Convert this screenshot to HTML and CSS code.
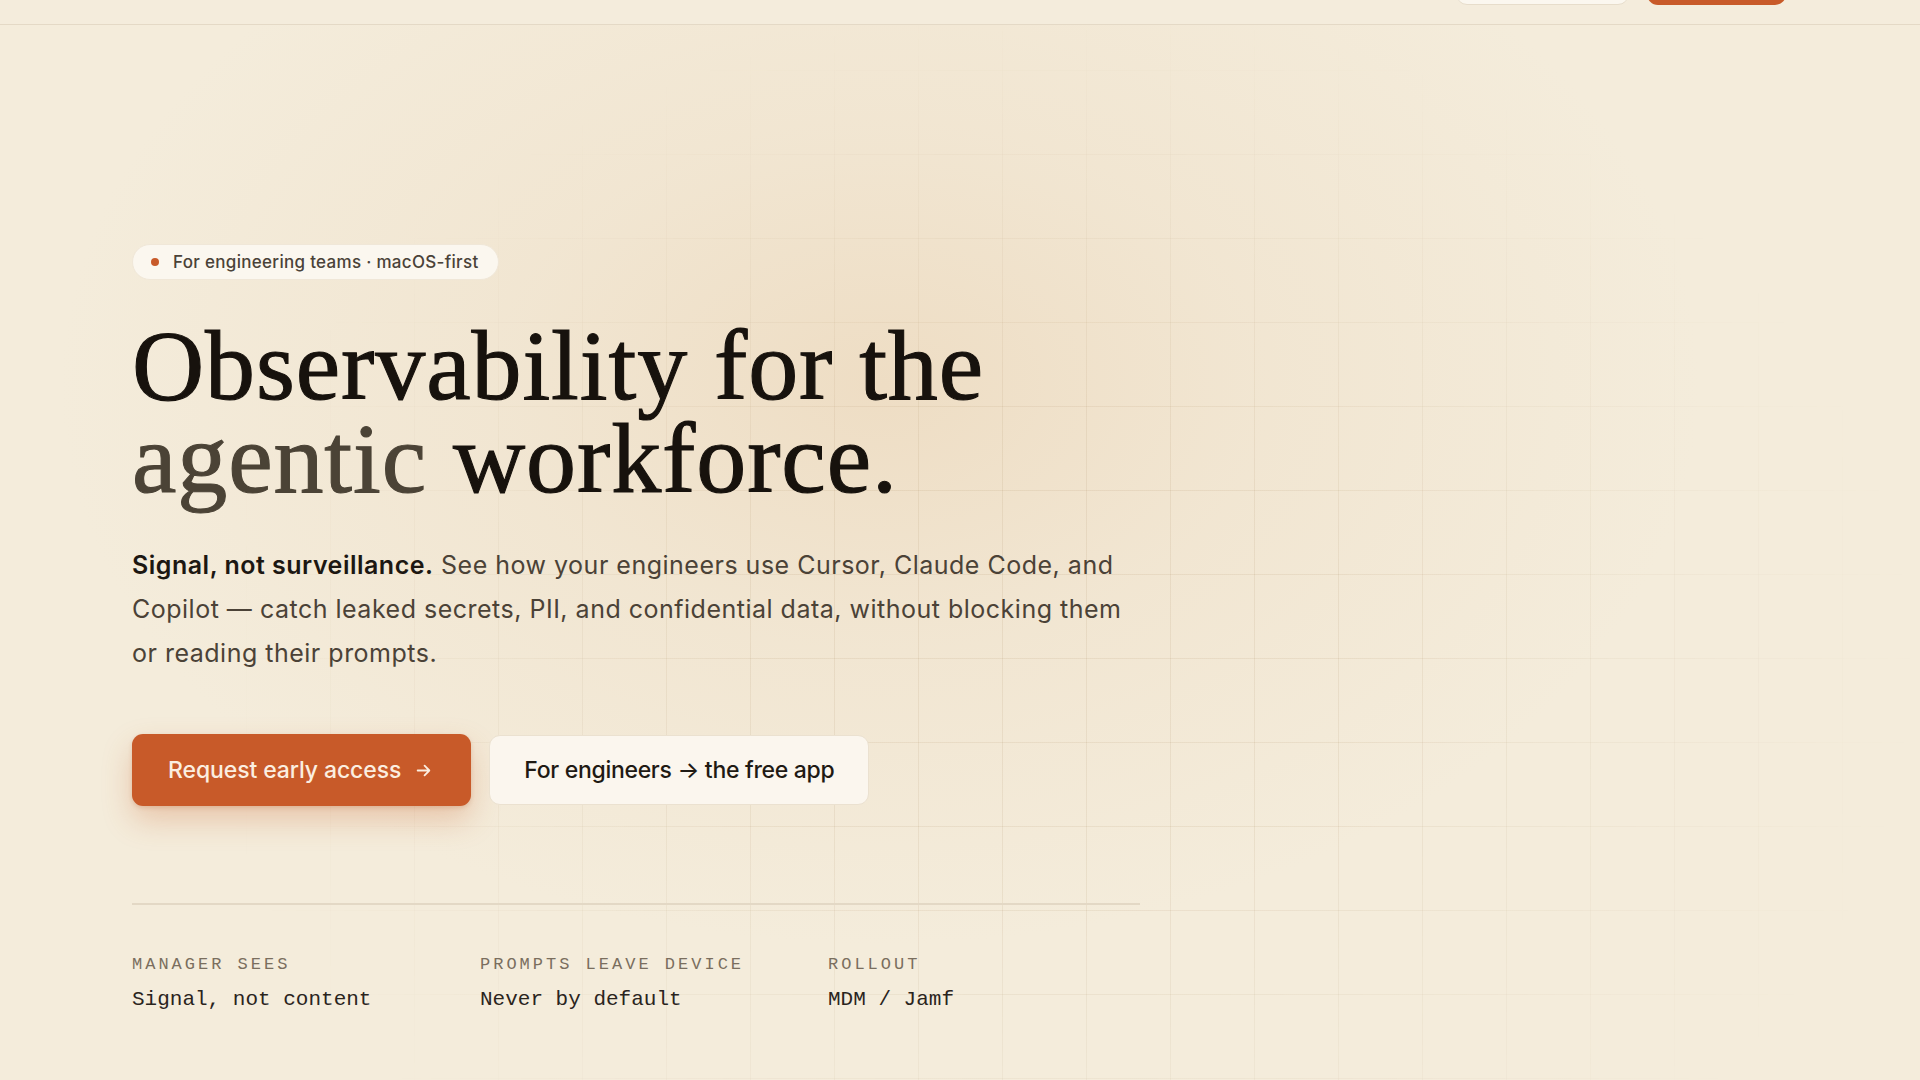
FILE: index.html
```html
<!DOCTYPE html>
<html lang="en">
<head>
<meta charset="utf-8">
<title>Observability for the agentic workforce</title>
<link rel="stylesheet" href="styles.css">
</head>
<body>
  <header class="topbar">
    <nav class="topbar-actions">
      <a class="nav-btn nav-btn-ghost" href="#" aria-label="Sign in"></a>
      <a class="nav-btn nav-btn-primary" href="#" aria-label="Get access"></a>
    </nav>
  </header>

  <main class="hero">
    <div class="hero-bg" aria-hidden="true"></div>
    <div class="hero-inner">
      <div class="badge">
        <span class="badge-dot"></span>
        <span>For engineering teams · macOS-first</span>
      </div>

      <h1 class="headline">Observability for the<br><span class="muted">agentic</span> workforce.</h1>

      <p class="lede"><strong>Signal, not surveillance.</strong> See how your engineers use Cursor, Claude Code, and Copilot — catch leaked secrets, PII, and confidential data, without blocking them or reading their prompts.</p>

      <div class="cta-row">
        <a class="btn btn-primary" href="#">
          <span>Request early access</span>
          <svg class="btn-arrow" viewBox="0 0 16 16" width="16" height="16" fill="none" stroke="currentColor" stroke-width="1.7" stroke-linecap="round" stroke-linejoin="round"><path d="M2.5 8h11M9 3.5 13.5 8 9 12.5"/></svg>
        </a>
        <a class="btn btn-secondary" href="#">For engineers → the free app</a>
      </div>

      <dl class="facts">
        <div class="fact">
          <dt>Manager sees</dt>
          <dd>Signal, not content</dd>
        </div>
        <div class="fact">
          <dt>Prompts leave device</dt>
          <dd>Never by default</dd>
        </div>
        <div class="fact">
          <dt>Rollout</dt>
          <dd>MDM / Jamf</dd>
        </div>
      </dl>
    </div>
  </main>
</body>
</html>
```

FILE: styles.css
```css
* {
  box-sizing: border-box;
}

html,
body {
  margin: 0;
  padding: 0;
}

body {
  background: #f4ecdb;
  color: #1a140f;
  font-family: Inter, "Noto Sans", "Liberation Sans", sans-serif;
  min-height: 1080px;
  overflow: hidden;
}

a {
  text-decoration: none;
}

.topbar {
  height: 25px;
  display: flex;
  justify-content: flex-end;
  align-items: flex-end;
  padding-right: 134px;
  border-bottom: 1px solid #e4d9c6;
  background: #f4ecdc;
  overflow: hidden;
  position: relative;
  z-index: 2;
}

.topbar-actions {
  display: flex;
  gap: 18px;
  margin-bottom: 19px;
}

.nav-btn {
  display: block;
  height: 42px;
  border-radius: 11px;
}

.nav-btn-ghost {
  width: 173px;
  background: #fbf7ef;
  border: 1px solid #e7ddcb;
}

.nav-btn-primary {
  width: 139px;
  background: #c85a29;
}

/* ---------- hero ---------- */

.hero {
  position: relative;
  min-height: 1055px;
}

.hero-bg {
  position: absolute;
  inset: 0;
  pointer-events: none;
  background:
    radial-gradient(ellipse 820px 560px at 880px 360px, rgba(236, 216, 188, 0.75) 0%, rgba(238, 222, 198, 0.45) 45%, rgba(244, 236, 219, 0) 100%);
}

/* faint square grid, faded toward the edges */
.hero-bg::after {
  content: "";
  position: absolute;
  inset: 0;
  background-image:
    linear-gradient(to right, rgba(150, 112, 64, 0.10) 1px, transparent 1px),
    linear-gradient(to bottom, rgba(150, 112, 64, 0.10) 1px, transparent 1px);
  background-size: 84px 84px;
  background-position: 78px 45px;
  -webkit-mask-image: radial-gradient(ellipse 860px 660px at 1060px 640px, #000 35%, transparent 100%);
  mask-image: radial-gradient(ellipse 860px 660px at 1060px 640px, #000 35%, transparent 100%);
}

.hero-inner {
  position: relative;
  z-index: 1;
  padding: 219px 0 0 132px;
  width: calc(132px + 1012px);
}

.badge {
  display: inline-flex;
  align-items: center;
  gap: 14px;
  height: 36px;
  padding: 0 19px 0 18px;
  border-radius: 999px;
  background: #fbf7ef;
  border: 1px solid #f0e7d8;
  font-size: 17px;
  letter-spacing: 0.3px;
  font-weight: 500;
  color: #4a4238;
}

.badge-dot {
  width: 8px;
  height: 8px;
  border-radius: 50%;
  background: #c85a29;
}

.headline {
  margin: 39px 0 0;
  font-family: "Liberation Serif", "DejaVu Serif", serif;
  font-weight: 400;
  font-size: 100px;
  line-height: 93px;
  letter-spacing: 0.9px;
  color: #17120d;
  -webkit-text-stroke: 1.1px #17120d;
}

.headline .muted {
  color: #4b4336;
  -webkit-text-stroke: 1.1px #4b4336;
}

.lede {
  margin: 38px 0 0;
  font-size: 25px;
  letter-spacing: 0.5px;
  line-height: 44px;
  color: #4b4237;
  max-width: 1012px;
}

.lede strong {
  color: #1c1712;
  font-weight: 600;
}

.cta-row {
  display: flex;
  align-items: center;
  gap: 18px;
  margin-top: 59px;
}

.btn {
  height: 72px;
  display: inline-flex;
  align-items: center;
  justify-content: center;
  border-radius: 11px;
  font-size: 23px;
  font-weight: 500;
  letter-spacing: -0.1px;
}

.btn-primary {
  padding: 0 39px 0 36px;
  gap: 14px;
  background: #c85a29;
  color: #fbeee0;
  box-shadow: 0 14px 30px rgba(200, 96, 44, 0.28), 0 2px 4px rgba(160, 70, 30, 0.18);
}

.btn-arrow {
  width: 17px;
  height: 17px;
}

.btn-secondary {
  height: 70px;
  padding: 0 34px;
  background: #fbf6ee;
  border: 1px solid #ebe1d0;
  color: #1f1a14;
  letter-spacing: -0.3px;
}

.facts {
  margin: 97px 0 0;
  padding-top: 50px;
  border-top: 2px solid #e3d8c5;
  display: grid;
  grid-template-columns: repeat(3, 300px);
  column-gap: 48px;
  width: 1008px;
}

.fact dt {
  font-family: "Liberation Mono", "DejaVu Sans Mono", monospace;
  font-size: 17px;
  line-height: 20px;
  letter-spacing: 3px;
  text-transform: uppercase;
  color: #7a6e5e;
}

.fact dd {
  margin: 12px 0 0;
  font-family: "Liberation Mono", "DejaVu Sans Mono", monospace;
  font-size: 21px;
  line-height: 26px;
  color: #2a241d;
}
```
